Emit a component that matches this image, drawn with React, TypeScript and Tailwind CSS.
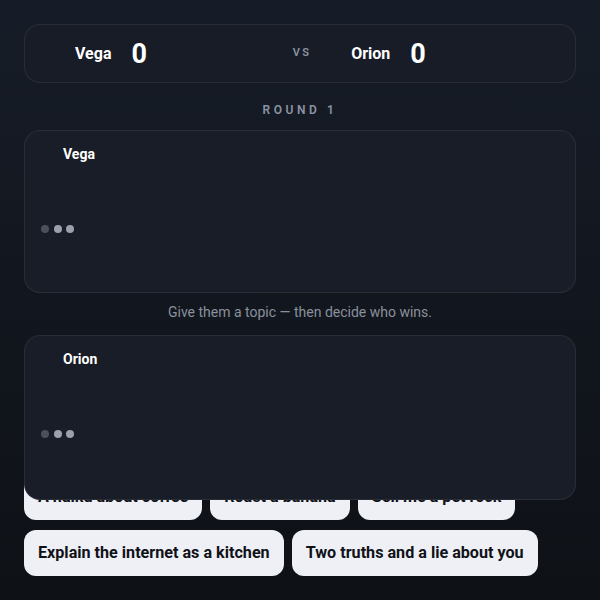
import React from "react";

const topics = [
  "A haiku about coffee",
  "Roast a banana",
  "Sell me a pet rock",
  "Explain the internet as a kitchen",
  "Two truths and a lie about you",
];

function Typing() {
  return (
    <div className="flex items-center gap-[4.5px] pl-4">
      <span className="h-2 w-2 rounded-full bg-[#4a505c]" />
      <span className="h-2 w-2 rounded-full bg-[#9aa0ad]" />
      <span className="h-2 w-2 rounded-full bg-[#9aa0ad]" />
    </div>
  );
}

function BotCard({ name, raised }: { name: string; raised?: boolean }) {
  return (
    <div
      className={
        "rounded-2xl border border-white/[0.07] bg-[#191d27] pt-[13px] " +
        (raised ? "relative z-10 h-[165px]" : "h-[163px]")
      }
    >
      <div className="pl-[38px] text-sm font-bold leading-5 text-white">{name}</div>
      <div className="mt-[61px]">
        <Typing />
      </div>
    </div>
  );
}

export default function App() {
  return (
    <div className="h-[600px] overflow-hidden bg-gradient-to-b from-[#161c27] to-[#0e1116] px-6 pt-6 font-['Roboto',sans-serif]">
      <div className="grid h-[59px] grid-cols-[1fr_auto_1fr] items-center gap-10 rounded-2xl border border-white/[0.07] bg-[#171c26] pl-[50px] pr-[46px]">
        <div className="flex items-center gap-5">
          <span className="text-base font-bold text-white">Vega</span>
          <span className="text-[27px] leading-8 font-bold text-white">0</span>
        </div>
        <span className="text-[11px] font-semibold tracking-[0.2em] text-[#8b93a3]">VS</span>
        <div className="flex items-center gap-5">
          <span className="text-base font-bold text-white">Orion</span>
          <span className="text-[27px] leading-8 font-bold text-white">0</span>
        </div>
      </div>

      <div className="mt-[19px] text-center text-xs leading-4 font-semibold tracking-[0.3em] text-[#8b93a3]">
        ROUND 1
      </div>

      <div className="mt-[12px]">
        <BotCard name="Vega" />
      </div>

      <p className="mt-[9px] text-center text-sm leading-5 text-[#8a909c]">
        Give them a topic — then decide who wins.
      </p>

      <div className="mt-[13px]">
        <BotCard name="Orion" raised />
      </div>

      <div className="-mt-[26px] flex flex-wrap gap-x-2 gap-y-[10px]">
        {topics.map((t) => (
          <button
            key={t}
            className="h-[46px] rounded-xl bg-[#eef0f6] px-[14px] text-[16.15px] font-bold text-[#101218]"
          >
            {t}
          </button>
        ))}
      </div>
    </div>
  );
}
